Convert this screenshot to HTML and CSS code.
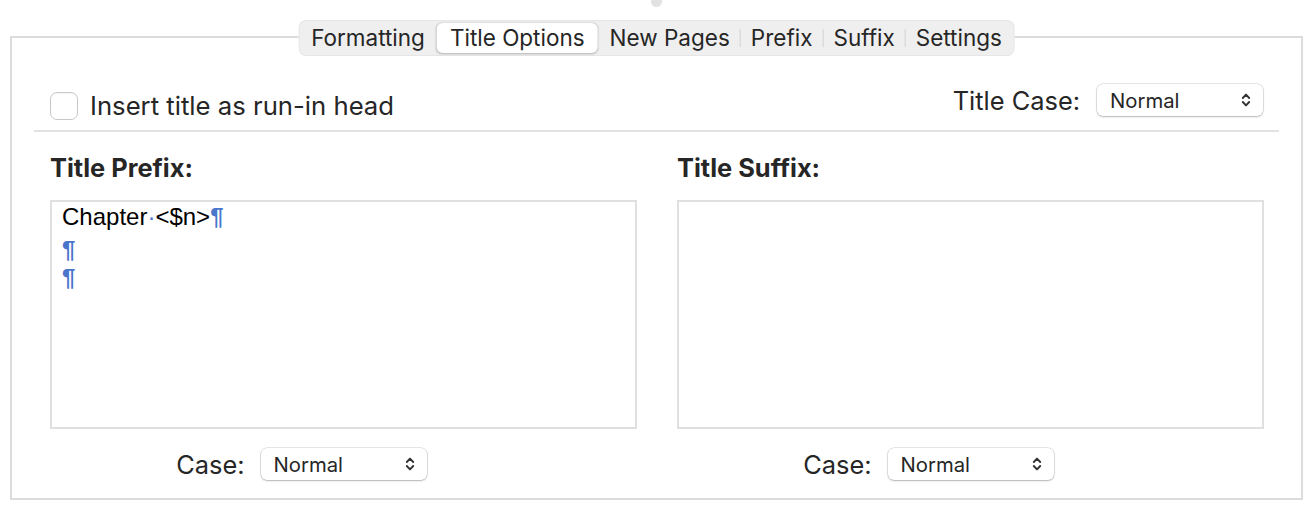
FILE: index.html
```html
<!DOCTYPE html>
<html>
<head>
<meta charset="utf-8">
<link rel="stylesheet" href="styles.css">
</head>
<body>
<div class="knob"></div>
<div class="frame">
  <div class="tabs">
    <span class="tab">Formatting</span>
    <span class="tab sel">Title Options</span>
    <span class="tab">New Pages</span>
    <span class="div"></span>
    <span class="tab">Prefix</span>
    <span class="div"></span>
    <span class="tab">Suffix</span>
    <span class="div"></span>
    <span class="tab">Settings</span>
  </div>
  <div class="top">
    <label class="check"><span class="box"></span><span>Insert title as run-in head</span></label>
    <div class="tcase"><span>Title Case:</span>
      <div class="select"><span>Normal</span><svg class="chev" width="10" height="16" viewBox="0 0 10 16"><path d="M1.8 6 L5 2.6 L8.2 6 M1.8 10 L5 13.4 L8.2 10" fill="none" stroke="#333" stroke-width="1.9" stroke-linecap="round" stroke-linejoin="round"/></svg></div>
    </div>
  </div>
  <div class="cols">
    <div class="col">
      <div class="head">Title Prefix:</div>
      <div class="text">
        <p class="l1">Chapter<span class="dot">·</span>&lt;$n&gt;<span class="pc">¶</span></p>
        <p><span class="pc">¶</span></p>
        <p><span class="pc">¶</span></p>
      </div>
      <div class="case">
        <span class="lab">Case:</span>
        <div class="select"><span>Normal</span><svg class="chev" width="10" height="16" viewBox="0 0 10 16"><path d="M1.8 6 L5 2.6 L8.2 6 M1.8 10 L5 13.4 L8.2 10" fill="none" stroke="#333" stroke-width="1.9" stroke-linecap="round" stroke-linejoin="round"/></svg></div>
        <span></span>
      </div>
    </div>
    <div class="col">
      <div class="head">Title Suffix:</div>
      <div class="text"></div>
      <div class="case">
        <span class="lab">Case:</span>
        <div class="select"><span>Normal</span><svg class="chev" width="10" height="16" viewBox="0 0 10 16"><path d="M1.8 6 L5 2.6 L8.2 6 M1.8 10 L5 13.4 L8.2 10" fill="none" stroke="#333" stroke-width="1.9" stroke-linecap="round" stroke-linejoin="round"/></svg></div>
        <span></span>
      </div>
    </div>
  </div>
</div>
</body>
</html>
```

FILE: styles.css
```css
html, body { margin: 0; padding: 0; background: #fff; }
body {
  width: 1312px; height: 508px; overflow: hidden;
  font-family: Inter, "Noto Sans", sans-serif;
  color: #262626;
  position: relative;
}
.knob {
  position: absolute; left: 651px; top: -4px;
  width: 11px; height: 11px; border-radius: 50%; background: #e2e2e2;
}
.frame {
  position: relative;
  margin: 36px 0 0 10px;
  width: 1289px; height: 460px;
  border: 2px solid #dcdcdc;
  box-sizing: content-box;
}
.tabs {
  position: absolute; left: 50%; top: -18px; transform: translateX(-50%);
  height: 36px; box-sizing: border-box;
  display: flex; align-items: center;
  padding: 0 3px;
  background: #efefef;
  border-radius: 8px;
  box-shadow: inset 0 0 0 1px #e6e6e6;
  font-size: 22.5px; white-space: nowrap;
}
.tab { padding: 0 10px; line-height: 30px; }
.tab.sel {
  background: #fff; border-radius: 6px; padding: 0 13px;
  box-shadow: 0 0.5px 2px rgba(0,0,0,0.25);
  margin: 0 2px;
}
.div { width: 1px; height: 18px; background: #d2d2d2; }
.top {
  margin: 0 22px;
  height: 94px; box-sizing: border-box;
  border-bottom: 2px solid #e2e2e2;
  display: flex; justify-content: space-between; align-items: flex-start;
  padding: 0 16px;
}
.check { display: flex; align-items: center; gap: 12px; font-size: 25.7px; margin-top: 52px; }
.box {
  width: 28px; height: 28px; box-sizing: border-box;
  border: 1px solid #c8c8c8; border-radius: 7px; background: #fff;
  box-shadow: inset 0 1px 1px rgba(0,0,0,0.04);
}
.tcase { display: flex; align-items: center; gap: 17px; font-size: 25.4px; margin-top: 46px; }
.select {
  width: 166px; height: 32px; box-sizing: border-box;
  display: flex; align-items: center; justify-content: space-between;
  padding: 0 12px 0 13px;
  background: #fff; border-radius: 6px;
  box-shadow: 0 0 0 0.5px rgba(0,0,0,0.18), 0 1px 2px rgba(0,0,0,0.22);
  font-size: 20.3px;
}
.chev { display: block; }
.cols {
  display: grid; grid-template-columns: 587px 587px; gap: 40px;
  padding: 0 38px;
}
.head { font-weight: 700; font-size: 25.4px; height: 68px; box-sizing: border-box; padding: 20px 0 0 0; }
.text {
  height: 229px; box-sizing: border-box;
  border: 2px solid #e0e0e0;
  padding: 1px 10px;
  font-family: "Liberation Sans", Arial, sans-serif;
  font-size: 24px; color: #000;
}
.text p { margin: 0; line-height: 28px; }
.text p.l1 { margin-bottom: 5px; }
.pc { color: #4a76cc; font-weight: 700; }
.dot { color: #4a76cc; }
.case {
  display: grid; grid-template-columns: 1fr auto 1fr; align-items: center;
  margin-top: 19px;
}
.lab { justify-self: end; margin-right: 16px; font-size: 25.4px; }
```
